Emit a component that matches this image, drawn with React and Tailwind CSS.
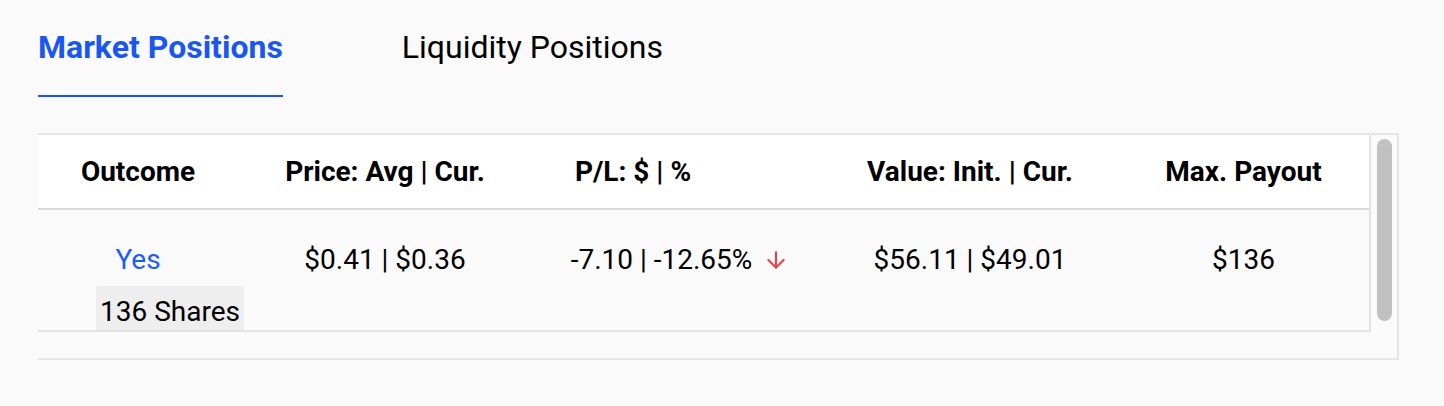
import React, { useState } from 'react';
import { ArrowDown } from 'lucide-react';

const TABS = ['Market Positions', 'Liquidity Positions'];

const COLS = [
  { key: 'outcome', label: 'Outcome', width: 'w-[200px]' },
  { key: 'price', label: 'Price: Avg | Cur.', width: 'w-[294px]' },
  { key: 'pl', label: 'P/L: $ | %', width: 'w-[290px]', headPad: 'pr-[88px]' },
  { key: 'value', label: 'Value: Init. | Cur.', width: 'w-[296px]' },
  { key: 'payout', label: 'Max. Payout', width: 'flex-1' },
];

const App = () => {
  const [tab, setTab] = useState(0);

  return (
    <div className="min-h-screen bg-[#fafafa] font-['Roboto',sans-serif] text-black">
      {/* Tabs */}
      <div className="flex gap-[119px] pl-[38px] pt-[28px]">
        {TABS.map((t, i) => (
          <button
            key={t}
            onClick={() => setTab(i)}
            className={`pb-[29px] text-[32px] leading-[38px] border-b-2 ${
              tab === i ? 'font-bold text-[#1a56f0] border-[#1a56f0]' : 'text-black border-transparent'
            }`}
          >
            {t}
          </button>
        ))}
      </div>

      {/* Table */}
      <div className="ml-[38px] mt-[36px] w-[1361px] border-t-2 border-r-2 border-b-2 border-[#e6e6e6] flex flex-col">
        <div className="flex">
          <div className="w-[1333px] border-r-2 border-b-2 border-[#e2e2e2]">
            <div className="flex h-[75px] items-center bg-white border-b-2 border-[#dadada]">
              {COLS.map(c => (
                <div key={c.key} className={`${c.width} ${c.headPad || ''} text-center text-[28px] font-bold`}>
                  {c.label}
                </div>
              ))}
            </div>
            <div className="flex h-[120px] bg-[#fafafa] text-[28px]">
              <div className="w-[200px] flex flex-col pt-[33px]">
                <span className="self-center text-[#1a5cff] leading-[34px]">Yes</span>
                <span className="ml-[58px] self-start whitespace-nowrap mt-[9px] bg-[#eeeeee] rounded-t-[4px] px-[4px] pt-[7px] leading-[37px] h-[44px]">136 Shares</span>
              </div>
              <div className="w-[294px] text-center pt-[33px] leading-[34px]">$0.41 | $0.36</div>
              <div className="w-[290px] pl-[6px] pt-[33px] leading-[34px] flex justify-center items-start">
                <span>-7.10 | -12.65%</span>
                <ArrowDown size={26} strokeWidth={2} className="ml-[11px] mt-[4px] text-[#e04545]" />
              </div>
              <div className="w-[296px] text-center pt-[33px] leading-[34px]">$56.11 | $49.01</div>
              <div className="flex-1 text-center pt-[33px] leading-[34px]">$136</div>
            </div>
          </div>
          {/* Scrollbar */}
          <div className="flex-1 flex justify-center pt-[4px]">
            <div className="w-[15px] h-[182px] rounded-full bg-[#c1c1c1]" />
          </div>
        </div>
        <div className="h-[26px]" />
      </div>
    </div>
  );
};

export default App;
